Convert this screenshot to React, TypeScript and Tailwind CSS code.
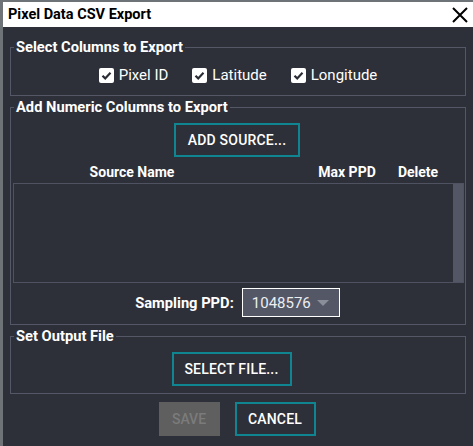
import React from "react";

const font = { fontFamily: "Roboto, 'Liberation Sans', sans-serif" };

function Check({ label }: { label: string }) {
  return (
    <div className="flex items-center gap-[5px]">
      <span className="flex h-[15px] w-[15px] items-center justify-center rounded-[2px] bg-white">
        <svg width="13" height="13" viewBox="0 0 13 13">
          <path d="M2.5 6.8 L5.2 9.4 L10.5 3.8" fill="none" stroke="#2b2d36" strokeWidth="2.2" />
        </svg>
      </span>
      <span className="text-[15px] leading-[20px] text-white">{label}</span>
    </div>
  );
}

function TealButton({ children, className = "" }: { children: React.ReactNode; className?: string }) {
  return (
    <div
      className={
        "flex h-[34px] items-center justify-center border-2 border-[#0f8592] text-[14px] font-medium tracking-[0.2px] text-white " +
        className
      }
    >
      {children}
    </div>
  );
}

export default function App() {
  return (
    <div className="h-[446px] w-[473px] overflow-hidden bg-[#6e7378] pl-[3px] pt-[2px]" style={font}>
      <div className="flex h-full flex-col bg-[#2e3039]">
        <div className="flex h-[25px] items-center justify-between bg-white pl-[5px] pr-[5px]">
          <span className="text-[14.5px] font-bold leading-[20px] text-black">Pixel Data CSV Export</span>
          <svg width="16" height="16" viewBox="0 0 16 16" className="mt-[1px]">
            <path d="M1 1 L15 15 M15 1 L1 15" stroke="#000" strokeWidth="2" fill="none" />
          </svg>
        </div>
        <div className="flex flex-col px-[7px] pt-[10px]">
          <fieldset className="border border-[#545765] pl-[3px] pr-[1px] pb-[10px]">
            <legend className="px-[2px] text-[14.7px] font-bold leading-[20px] text-white">Select Columns to Export</legend>
            <div className="mt-[8px] flex justify-center gap-[24px] pr-[2px]">
              <Check label="Pixel ID" />
              <Check label="Latitude" />
              <Check label="Longitude" />
            </div>
          </fieldset>
          <fieldset className="mt-[1px] border border-[#545765] pl-[3px] pr-[1px] pb-[7px]">
            <legend className="px-[2px] text-[14.7px] font-bold leading-[20px] text-white">Add Numeric Columns to Export</legend>
            <div className="mt-[6px] flex justify-center pr-[4px]">
              <TealButton className="w-[126px]">ADD SOURCE...</TealButton>
            </div>
            <div className="mt-[5px] ml-[-1px] flex text-[14px] font-bold leading-[20px] text-white">
              <div className="w-[238px] text-center">Source Name</div>
              <div className="w-[48px]" />
              <div className="w-[96px] text-center">Max PPD</div>
              <div className="w-[46px] text-center">Delete</div>
            </div>
            <div className="ml-[-1px] mt-[1px] flex h-[100px] justify-end border border-[#4f5260] bg-[#2e3039]">
              <div className="w-[10px] bg-[#535765]" />
            </div>
            <div className="mt-[5px] flex items-center justify-center gap-[8px] pr-[3px]">
              <span className="text-[14.7px] font-bold leading-[20px] text-white">Sampling PPD:</span>
              <div className="flex h-[29px] w-[98px] items-center border border-white bg-[#535766] pl-[9px]">
                <span className="text-[15px] leading-[20px] text-[#eceef2]">1048576</span>
                <svg width="12" height="7" viewBox="0 0 12 7" className="ml-[6px] mt-[1px]">
                  <path d="M0 0 L12 0 L6 6 Z" fill="#8a8e99" />
                </svg>
              </div>
            </div>
          </fieldset>
          <fieldset className="mt-[1px] border border-[#545765] pl-[3px] pr-[1px] pb-[7px]">
            <legend className="px-[2px] text-[14.7px] font-bold leading-[20px] text-white">Set Output File</legend>
            <div className="mt-[6px] flex justify-center pr-[15px]">
              <TealButton className="w-[120px]">SELECT FILE...</TealButton>
            </div>
          </fieldset>
          <div className="mt-[8px] flex justify-center gap-[15px] pr-[2px]">
            <div className="flex h-[34px] w-[61px] items-center justify-center bg-[#5f5f5f] text-[14px] font-medium text-[#7b7b7b]">
              SAVE
            </div>
            <TealButton className="w-[81px]">CANCEL</TealButton>
          </div>
        </div>
      </div>
    </div>
  );
}
